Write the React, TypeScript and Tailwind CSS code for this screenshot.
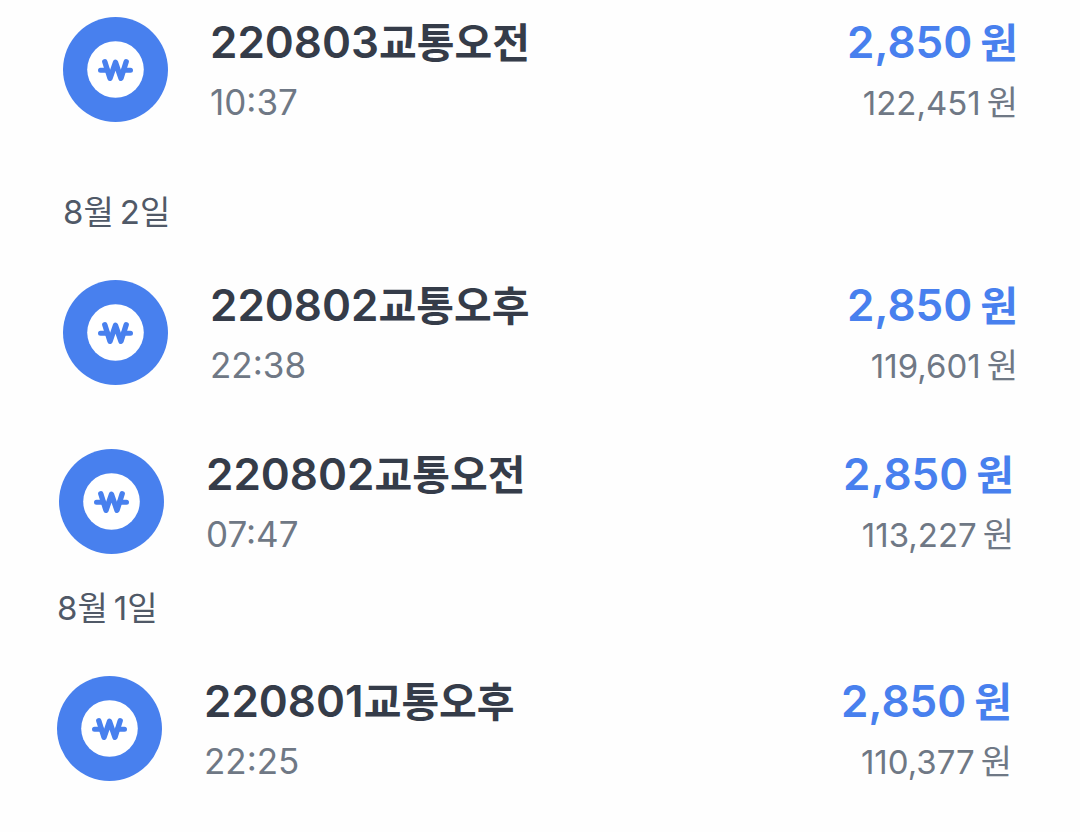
import React from "react";

type Entry = { title: string; suffix: string; time: string; amount: string; balance: string };

function WonBadge() {
  return (
    <svg viewBox="0 0 105 105" className="size-[105px] shrink-0" aria-hidden="true">
      <circle cx="52.5" cy="52.5" r="52.5" fill="#4880ee" />
      <circle cx="52.5" cy="52.5" r="28.3" fill="#fff" />
      <g fill="none" stroke="#4880ee" strokeLinecap="round" strokeLinejoin="round">
        <path d="M41.8 44.8 L47 61.3 L52.5 45.3 L58 61.3 L63.2 44.8" strokeWidth="5.4" />
        <path d="M37.5 53.3 H44.5 M60.5 53.3 H67.5" strokeWidth="5" />
      </g>
    </svg>
  );
}

function Row({ entry }: { entry: Entry }) {
  return (
    <article className="flex items-start">
      <WonBadge />
      <div className="ml-[42px] flex-1">
        <h3 className="h-[52px] whitespace-nowrap text-[44px] leading-[50px] font-semibold text-[#353c49]">
          {entry.title}
          <span className="text-[41px]">{entry.suffix}</span>
        </h3>
        <time className="mt-3 block h-[44px] text-[35px] leading-[42px] text-[#6f7885]">{entry.time}</time>
      </div>
      <div className="whitespace-nowrap">
        <p className="flex h-[52px] items-baseline justify-end gap-2 text-[44px] leading-[50px] font-semibold text-[#4880ee]">
          {entry.amount}
          <span className="text-[41px]">원</span>
        </p>
        <p className="mt-3 flex h-[44px] items-baseline justify-end gap-1.5 text-[34px] leading-[44px] text-[#6f7885]">
          <span className="text-[33px]">{entry.balance}</span>
          <span>원</span>
        </p>
      </div>
    </article>
  );
}

function DateLabel({ month, day }: { month: string; day: string }) {
  return (
    <h2 className="flex h-[44px] gap-1.5 text-[33px] leading-[42px] text-[#505967]">
      <span>{month}월</span>
      <span>{day}일</span>
    </h2>
  );
}

const entries: Entry[] = [
  { title: "220803", suffix: "교통오전", time: "10:37", amount: "2,850", balance: "122,451" },
  { title: "220802", suffix: "교통오후", time: "22:38", amount: "2,850", balance: "119,601" },
  { title: "220802", suffix: "교통오전", time: "07:47", amount: "2,850", balance: "113,227" },
  { title: "220801", suffix: "교통오후", time: "22:25", amount: "2,850", balance: "110,377" },
];

export default function App() {
  return (
    <main className="min-h-screen bg-[#fefefe] pt-[17px] pb-12 font-['Inter','Noto_Sans_CJK_KR',sans-serif]">
      <section className="pr-[62px] pl-[63px]">
        <Row entry={entries[0]} />
      </section>
      <section className="mt-[66px] pr-[62px] pl-[63px]">
        <DateLabel month="8" day="2" />
        <div className="mt-[45px]">
          <Row entry={entries[1]} />
        </div>
      </section>
      <section className="mt-[61px] pr-[66px] pl-[59px]">
        <Row entry={entries[2]} />
      </section>
      <section className="mt-[30px] pr-[68px] pl-[57px]">
        <DateLabel month="8" day="1" />
        <div className="mt-[45px]">
          <Row entry={entries[3]} />
        </div>
      </section>
    </main>
  );
}
